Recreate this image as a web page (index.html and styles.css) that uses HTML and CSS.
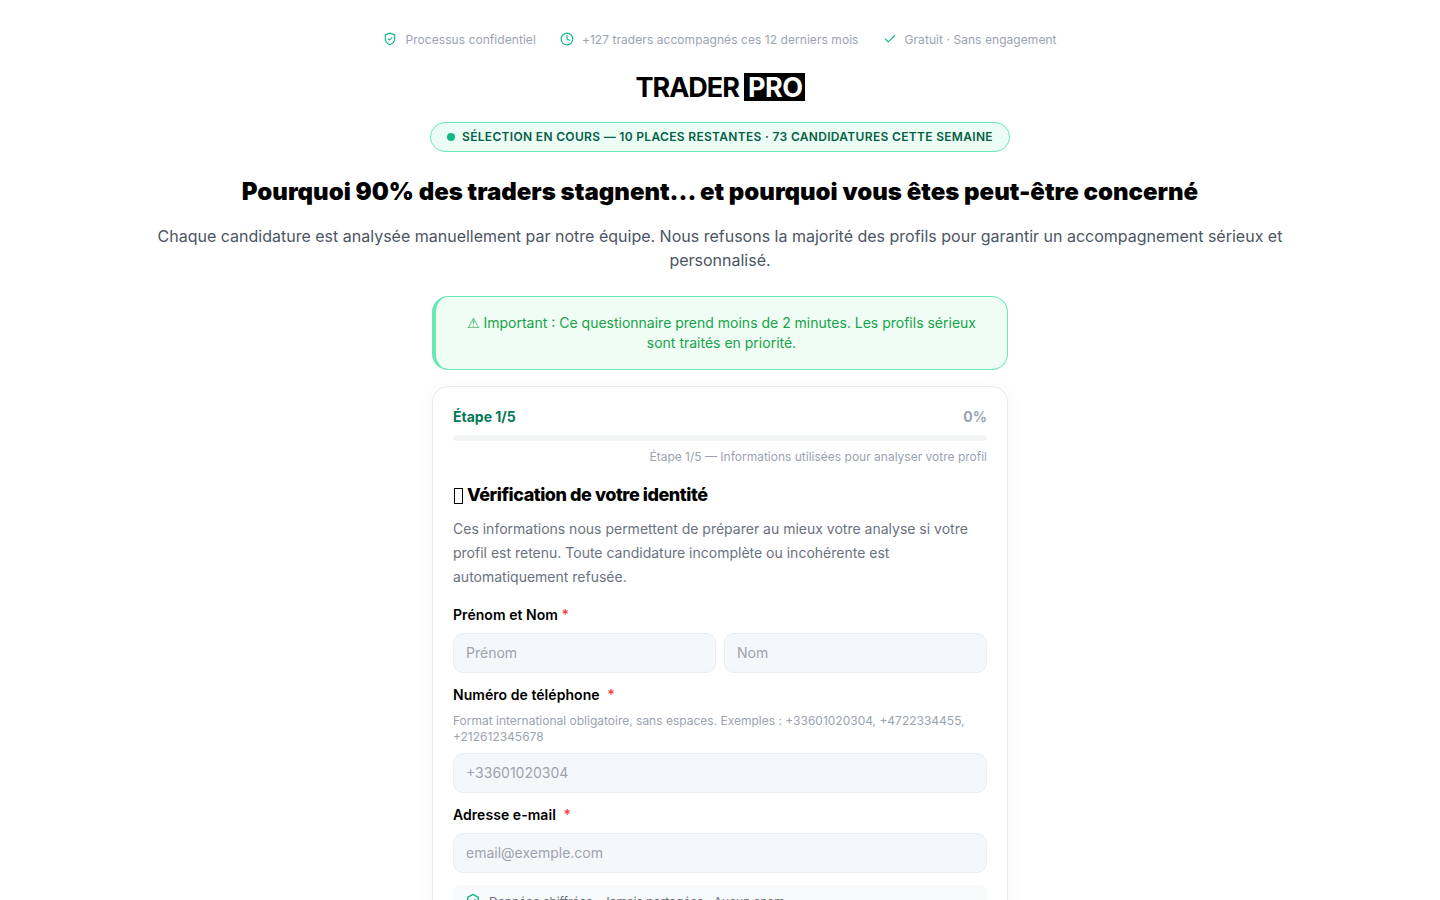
FILE: index.html
```html
<!DOCTYPE html>
<html lang="fr">
<head>
    <meta charset="UTF-8">
    <meta name="viewport" content="width=device-width, initial-scale=1.0">
    <title>TraderPro - Candidature</title>
    <link rel="stylesheet" href="styles.css">
</head>
<body>

    <div class="page">
        <!-- Bandeau de confiance -->
        <div class="trust-bar">
            <div class="trust-item">
                <svg class="trust-icon" viewBox="0 0 24 24"><path d="M12 22s8-4 8-10V5l-8-3-8 3v7c0 6 8 10 8 10z"/><path d="M9 12l2 2 4-4"/></svg>
                Processus confidentiel
            </div>
            <div class="trust-item">
                <svg class="trust-icon" viewBox="0 0 24 24"><circle cx="12" cy="12" r="10"/><path d="M12 6v6l4 2"/></svg>
                +127 traders accompagnés ces 12 derniers mois
            </div>
            <div class="trust-item">
                <svg class="trust-icon" viewBox="0 0 24 24"><path d="M20 6L9 17l-5-5"/></svg>
                Gratuit · Sans engagement
            </div>
        </div>

        <!-- Logo -->
        <div class="logo">
            <span class="logo-trader">TRADER</span><span class="logo-pro">PRO</span>
        </div>

        <!-- Badge -->
        <div class="badge">
            <span class="badge-dot"></span>
            SÉLECTION EN COURS — 10 PLACES RESTANTES · 73 CANDIDATURES CETTE SEMAINE
        </div>

        <h1 class="title">Pourquoi 90% des traders stagnent... et pourquoi vous êtes peut-être concerné</h1>
        <p class="subtitle">Chaque candidature est analysée manuellement par notre équipe. Nous refusons la majorité des profils pour garantir un accompagnement sérieux et personnalisé.</p>

        <div class="notice"><span class="notice-sign">⚠</span> Important : Ce questionnaire prend moins de 2 minutes. Les profils sérieux sont traités en priorité.</div>

        <!-- Formulaire -->
        <div class="form-card">
            <div class="progress-head">
                <span class="progress-step">Étape 1/5</span>
                <span class="progress-pct">0%</span>
            </div>
            <div class="progress-track"></div>
            <div class="progress-note">Étape 1/5 — Informations utilisées pour analyser votre profil</div>

            <h2 class="form-title"><span class="missing-glyph"></span>Vérification de votre identité</h2>
            <p class="form-intro">Ces informations nous permettent de préparer au mieux votre analyse si votre profil est retenu. Toute candidature incomplète ou incohérente est automatiquement refusée.</p>

            <label class="field-label field-first">Prénom et Nom <span class="req">*</span></label>
            <div class="name-row">
                <input class="input" type="text" placeholder="Prénom">
                <input class="input" type="text" placeholder="Nom">
            </div>

            <label class="field-label">Numéro de téléphone <span class="req req-far">*</span></label>
            <div class="field-hint">Format international obligatoire, sans espaces. Exemples : +33601020304, +4722334455, +212612345678</div>
            <input class="input" type="tel" placeholder="+33601020304">

            <label class="field-label">Adresse e-mail <span class="req req-far">*</span></label>
            <input class="input" type="email" placeholder="email@exemple.com">

            <div class="privacy">
                <svg class="privacy-icon" viewBox="0 0 24 24"><path d="M12 2l8 4.5v11L12 22l-8-4.5v-11z"/><path d="M9 12l2 2 4-4"/></svg>
                Données chiffrées · Jamais partagées · Aucun spam
            </div>
        </div>
    </div>

</body>
</html>
```

FILE: styles.css
```css
/* Global */
* {
    box-sizing: border-box;
}

html, body {
    height: 100%;
}

body {
    margin: 0;
    background: #fff;
    font-family: Inter, "Noto Sans", sans-serif;
    color: #000;
    overflow: hidden;
}

.page {
    display: flex;
    flex-direction: column;
    align-items: center;
    padding-top: 31px;
}

/* Bandeau de confiance */
.trust-bar {
    display: flex;
    gap: 24px;
    height: 16px;
    align-items: center;
    font-size: 12px;
    letter-spacing: 0.06px;
    color: #9ca3af;
}

.trust-item {
    display: flex;
    align-items: center;
    gap: 8px;
}

.trust-icon {
    width: 14px;
    height: 14px;
    fill: none;
    stroke: #10b981;
    stroke-width: 2;
    stroke-linecap: round;
    stroke-linejoin: round;
}

/* Logo */
.logo {
    display: flex;
    align-items: flex-start;
    height: 28px;
    margin-top: 26px;
    font-size: 27px;
    font-weight: 700;
    line-height: 30px;
}

.logo-trader {
    letter-spacing: -1px;
}

.logo-pro {
    height: 28px;
    margin-left: 5px;
    padding: 0 2px 0 4px;
    background: #000;
    color: #fff;
    letter-spacing: -0.5px;
}

/* Badge */
.badge {
    display: flex;
    align-items: center;
    gap: 7px;
    height: 30px;
    margin-top: 21px;
    padding: 0 16px 1px;
    border: 1px solid #6ee7b7;
    border-radius: 15px;
    background: #ecfdf5;
    color: #065f46;
    font-size: 12px;
    font-weight: 600;
    letter-spacing: 0.32px;
}

.badge-dot {
    width: 8px;
    height: 8px;
    margin-top: 1px;
    border-radius: 50%;
    background: #10b981;
}

.title {
    margin: 24px 0 0;
    font-size: 24px;
    line-height: 32px;
    font-weight: 900;
    text-align: center;
}

.subtitle {
    width: 1136px;
    margin: 16px 0 0;
    font-size: 16px;
    line-height: 24px;
    color: #4b5563;
    text-align: center;
}

.notice {
    width: 576px;
    margin-top: 24px;
    padding: 16px 24px;
    border: 1px solid #6ee7b7;
    border-left: 4px solid #6ee7b7;
    border-radius: 16px;
    background: #f0fdf4;
    color: #16a34a;
    font-size: 14px;
    line-height: 20px;
    text-align: center;
}

.notice-sign {
    font-family: "DejaVu Sans", sans-serif;
}

/* Formulaire */
.form-card {
    width: 576px;
    height: 700px;
    margin-top: 16px;
    padding: 20px;
    border: 1px solid #e8eaed;
    border-radius: 16px;
    background: #fff;
    box-shadow: 0 4px 24px rgba(0, 0, 0, 0.04);
}

.progress-head {
    display: flex;
    justify-content: space-between;
    align-items: center;
    height: 20px;
    font-size: 14px;
    font-weight: 700;
    line-height: 18px;
}

.progress-step {
    color: #047857;
}

.progress-pct {
    color: #9ca3af;
}

.progress-track {
    height: 6px;
    margin-top: 8px;
    border-radius: 3px;
    background: #f3f4f6;
}

.progress-note {
    margin-top: 8px;
    font-size: 12px;
    line-height: 16px;
    color: #9ca3af;
    text-align: right;
}

.form-title {
    display: flex;
    align-items: center;
    margin: 16px 0 0;
    font-size: 18px;
    line-height: 28px;
    font-weight: 800;
    letter-spacing: -0.45px;
}

.missing-glyph {
    width: 9px;
    height: 16px;
    margin: 2px 4px 0 1px;
    border: 1px solid #000;
}

.form-intro {
    margin: 8px 0 0;
    font-size: 14px;
    line-height: 24px;
    color: #6b7280;
}

.field-label {
    display: block;
    margin-top: 12px;
    font-size: 14px;
    line-height: 20px;
    font-weight: 600;
    letter-spacing: 0.05px;
}

.field-first {
    margin-top: 16px;
}

.req {
    color: #ef4444;
}

.req-far {
    margin-left: 4px;
}

.name-row {
    display: flex;
    gap: 8px;
}

.name-row .input {
    flex: 1;
    min-width: 0;
}

.input {
    display: block;
    width: 100%;
    height: 40px;
    margin-top: 8px;
    padding: 0 12px 2px;
    border: 1px solid #e9eef3;
    border-radius: 10px;
    background: #f5f8fb;
    font-family: inherit;
    font-size: 14px;
    color: #111827;
}

.input::placeholder {
    color: #9ca3af;
    opacity: 1;
}

.field-hint {
    margin-top: 8px;
    font-size: 12px;
    line-height: 16px;
    color: #9ca3af;
}

.privacy {
    display: flex;
    align-items: center;
    gap: 8px;
    height: 32px;
    margin-top: 12px;
    padding: 0 12px;
    border-radius: 8px;
    background: #f9fafb;
    font-size: 12px;
    color: #6b7280;
}

.privacy-icon {
    width: 16px;
    height: 16px;
    fill: none;
    stroke: #10b981;
    stroke-width: 2;
    stroke-linecap: round;
    stroke-linejoin: round;
}
```
